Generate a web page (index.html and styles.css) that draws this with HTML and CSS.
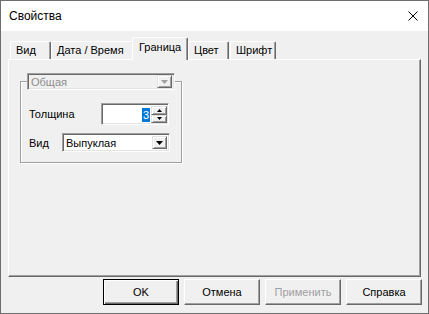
FILE: index.html
```html
<!DOCTYPE html>
<html lang="ru">
<head>
    <meta charset="UTF-8">
    <title>Свойства</title>
    <link rel="stylesheet" href="styles.css">
</head>
<body>
    <div class="window">
        <div class="titlebar">
            <span class="title">Свойства</span>
            <svg class="close" width="10" height="10" viewBox="0 0 10 10">
                <path d="M0.5 0.5 L9.5 9.5 M9.5 0.5 L0.5 9.5" stroke="#000" stroke-width="1" fill="none"/>
            </svg>
        </div>

        <div class="content">
            <div class="tabs">
                <div class="tab tab-view">Вид</div>
                <div class="tab tab-date">Дата / Время</div>
                <div class="tab tab-border active">Граница</div>
                <div class="tab tab-color">Цвет</div>
                <div class="tab tab-font">Шрифт</div>
            </div>

            <div class="panel">
                <fieldset class="group">
                    <legend class="combo combo-general disabled">
                        <span class="combo-text">Общая</span>
                        <span class="combo-btn">
                            <svg width="7" height="4" viewBox="0 0 7 4"><polygon points="0,0 7,0 3.5,4" fill="#a0a0a0"/></svg>
                        </span>
                    </legend>

                    <div class="row">
                        <label class="label label-width">Толщина</label>
                        <div class="spin">
                            <div class="spin-edit"><span class="selected">3</span></div>
                            <div class="spin-btns">
                                <span class="spin-btn">
                                    <svg width="5" height="3" viewBox="0 0 5 3"><polygon points="2.5,0 5,3 0,3" fill="#000"/></svg>
                                </span>
                                <span class="spin-btn">
                                    <svg width="5" height="3" viewBox="0 0 5 3"><polygon points="0,0 5,0 2.5,3" fill="#000"/></svg>
                                </span>
                            </div>
                        </div>
                    </div>

                    <div class="row">
                        <label class="label label-kind">Вид</label>
                        <div class="combo combo-kind">
                            <span class="combo-text">Выпуклая</span>
                            <span class="combo-btn">
                                <svg width="7" height="4" viewBox="0 0 7 4"><polygon points="0,0 7,0 3.5,4" fill="#000"/></svg>
                            </span>
                        </div>
                    </div>
                </fieldset>
            </div>

            <div class="buttons">
                <button class="btn default">OK</button>
                <button class="btn">Отмена</button>
                <button class="btn" disabled>Применить</button>
                <button class="btn">Справка</button>
            </div>
        </div>
    </div>
</body>
</html>
```

FILE: styles.css
```css
* {
    box-sizing: border-box;
}

body {
    margin: 0;
    font-family: "Liberation Sans", Arial, sans-serif;
    font-size: 11px;
    color: #000;
}

.window {
    width: 429px;
    height: 314px;
    border: 1px solid #6e6e6e;
    background-color: #f0f0f0;
    display: flex;
    flex-direction: column;
}

.titlebar {
    height: 30px;
    flex: none;
    background-color: #fff;
    display: flex;
    align-items: center;
    justify-content: space-between;
    padding: 0 10px 0 8px;
}

.title {
    font-size: 12px;
}

.close {
    display: block;
}

.content {
    flex: 1;
    padding: 6px 7px 0;
    display: flex;
    flex-direction: column;
}

/* tab strip */
.tabs {
    height: 22px;
    display: flex;
    align-items: flex-end;
    padding-left: 2px;
}

.tab {
    height: 18px;
    line-height: 16px;
    padding-left: 5px;
    white-space: nowrap;
    border-top: 1px solid #fff;
    border-left: 1px solid #fff;
    border-right: 1px solid #696969;
    box-shadow: inset -1px 0 #a0a0a0;
    border-radius: 2px 2px 0 0;
    background-color: #f0f0f0;
}

.tab-view { width: 41px; }
.tab-date { width: 83px; }
.tab-border { width: 52px; }
.tab-color { width: 41px; }
.tab-font { width: 46px; margin-left: 1px; }

.tab.active {
    width: 56px;
    height: 23px;
    line-height: 19px;
    padding-left: 6px;
    margin: 0 -2px -1px;
    position: relative;
    z-index: 1;
}

.tab.active + .tab {
    margin-left: 2px;
}

/* page */
.panel {
    height: 218px;
    flex: none;
    border: 1px solid;
    border-color: #fff #696969 #696969 #fff;
    box-shadow: inset -1px -1px #a0a0a0;
    padding: 13px 11px;
}

.group {
    width: 162px;
    min-width: 0;
    margin: 0;
    padding: 13px 8px 10px;
    border: 1px solid #a0a0a0;
    box-shadow: inset 1px 1px #fff, 1px 1px #fff;
}

.row {
    display: flex;
    align-items: center;
}

.row + .row {
    margin-top: 8px;
}

.label-width { width: 72px; }
.label-kind { width: 33px; }

/* sunken fields */
.combo, .spin {
    display: flex;
    border: 1px solid;
    border-color: #a0a0a0 #fff #fff #a0a0a0;
    box-shadow: inset 1px 1px #696969, inset -1px -1px #e3e3e3;
    background-color: #fff;
    padding: 2px;
}

.combo-general {
    width: 148px;
    height: 17px;
    margin-left: -2px;
    padding: 1px 2px 2px 2px;
    background-color: #f0f0f0;
    color: #8d8d8d;
}

.combo-kind {
    width: 108px;
    height: 19px;
}

.combo-text {
    flex: 1;
    line-height: 14px;
    padding-left: 1px;
}

.combo-btn, .spin-btn {
    display: flex;
    align-items: center;
    justify-content: center;
    border: 1px solid;
    border-color: #e3e3e3 #696969 #696969 #e3e3e3;
    box-shadow: inset 1px 1px #fff, inset -1px -1px #a0a0a0;
    background-color: #f0f0f0;
}

.combo-btn {
    width: 15px;
}

.combo-general .combo-btn {
    height: 13px;
}

.spin {
    width: 68px;
    height: 22px;
    padding: 2px 1px 1px 2px;
}

.spin-edit {
    flex: 1;
    display: flex;
    justify-content: flex-end;
    align-items: center;
    padding-right: 1px;
}

.selected {
    background-color: #0078d7;
    color: #fff;
    line-height: 14px;
    padding: 0 1px;
}

.spin-btns {
    width: 16px;
    display: flex;
    flex-direction: column;
}

.spin-btn {
    flex: 1;
}

/* dialog buttons */
.buttons {
    display: flex;
    justify-content: flex-end;
    gap: 6px;
    margin-top: 2px;
    margin-right: -1px;
}

.btn {
    width: 76px;
    height: 26px;
    font-family: inherit;
    font-size: 11px;
    font-weight: normal;
    color: #000;
    background-color: #f0f0f0;
    border: 1px solid;
    border-color: #fff #696969 #696969 #fff;
    box-shadow: inset -1px -1px #a0a0a0;
    padding: 0;
}

.btn + .btn {
    margin-left: -1px;
}

.btn.default {
    border-color: #000;
    box-shadow: inset 1px 1px #fff, inset -1px -1px #696969, inset -2px -2px #a0a0a0;
}

.btn:disabled {
    color: #a0a0a0;
}
```
